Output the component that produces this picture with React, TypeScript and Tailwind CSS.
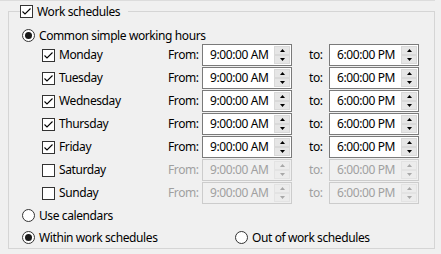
import React from 'react';

const days = [
  { name: 'Monday', on: true },
  { name: 'Tuesday', on: true },
  { name: 'Wednesday', on: true },
  { name: 'Thursday', on: true },
  { name: 'Friday', on: true },
  { name: 'Saturday', on: false },
  { name: 'Sunday', on: false },
];

const CheckBox = ({ checked }: { checked: boolean }) => (
  <span className="w-[13px] h-[13px] border border-[#333333] bg-white flex items-center justify-center shrink-0">
    {checked && (
      <svg width="11" height="11" viewBox="0 0 11 11">
        <path d="M1.5 5.5 L4 8 L9.5 2.5" stroke="#000" fill="none" strokeWidth="1.1" />
      </svg>
    )}
  </span>
);

const Radio = ({ checked }: { checked: boolean }) => (
  <span className="w-[13px] h-[13px] rounded-full border border-[#333333] bg-white flex items-center justify-center shrink-0">
    {checked && <span className="w-[7px] h-[7px] rounded-full bg-[#1a1a1a]" />}
  </span>
);

const Arrow = ({ up, disabled }: { up: boolean; disabled: boolean }) => (
  <svg width="5" height="3" viewBox="0 0 5 3">
    <path d={up ? 'M0 3 L2.5 0 L5 3 Z' : 'M0 0 L2.5 3 L5 0 Z'} fill={disabled ? '#a8a8a8' : '#000'} />
  </svg>
);

const TimeBox = ({ value, disabled }: { value: string; disabled: boolean }) => (
  <div
    className={
      disabled
        ? 'w-[90px] h-[22px] border border-[#cccccc] bg-[#f0f0f0] text-[#a0a0a0] flex items-center'
        : 'w-[90px] h-[22px] border border-[#7a7a7a] bg-white text-black flex items-center'
    }
  >
    <span className="pl-[7px] flex-1 leading-none">{value}</span>
    <div className="w-[17px] h-full py-px pr-px flex flex-col">
      <div
        className={
          disabled
            ? 'flex-1 border border-[#e3e3e3] bg-[#ececec] flex items-center justify-center'
            : 'flex-1 border border-[#d9d9d9] bg-[#e6e6e6] flex items-center justify-center'
        }
      >
        <Arrow up disabled={disabled} />
      </div>
      <div
        className={
          disabled
            ? 'flex-1 border border-[#e3e3e3] bg-[#ececec] flex items-center justify-center'
            : 'flex-1 border border-[#d9d9d9] bg-[#e6e6e6] flex items-center justify-center'
        }
      >
        <Arrow up={false} disabled={disabled} />
      </div>
    </div>
  </div>
);

export default function App() {
  return (
    <div
      className="w-[441px] h-[254px] bg-[#f0f0f0] text-[12px] tracking-[-0.4px] text-black overflow-hidden"
      style={{ fontFamily: '"Noto Sans", "Segoe UI", sans-serif' }}
    >
      {/* bottom edge of the group above */}
      <div className="w-[435px] h-px bg-[#dcdcdc]" />

      <fieldset className="ml-[8px] w-[427px] h-[249px] -mt-px border border-[#d5d5d5] px-0 pb-[5px] m-0 min-w-0">
        <legend className="ml-[11px] pr-[8px] h-[23px] flex items-center gap-[4px]">
          <CheckBox checked />
          <span>Work schedules</span>
        </legend>

        <div className="flex flex-col">
          {/* common hours */}
          <div className="mt-[6px] h-[13px] pl-[13px] flex items-center gap-[4px]">
            <Radio checked />
            <span>Common simple working hours</span>
          </div>

          <div className="mt-[2px] flex flex-col gap-px">
            {days.map((d) => (
              <div key={d.name} className="h-[22px] flex items-center">
                <div className="w-[159px] pl-[33px] flex items-center gap-[4px]">
                  <CheckBox checked={d.on} />
                  <span>{d.name}</span>
                </div>
                <span className={d.on ? 'w-[34px]' : 'w-[34px] text-[#a0a0a0]'}>From:</span>
                <TimeBox value="9:00:00 AM" disabled={!d.on} />
                <span className={d.on ? 'w-[37px] pl-[17px]' : 'w-[37px] pl-[17px] text-[#a0a0a0]'}>to:</span>
                <TimeBox value="6:00:00 PM" disabled={!d.on} />
              </div>
            ))}
          </div>

          <div className="mt-[5px] h-[13px] pl-[13px] flex items-center gap-[4px]">
            <Radio checked={false} />
            <span>Use calendars</span>
          </div>

          <div className="mt-[9px] h-[13px] pl-[13px] flex items-center">
            <div className="w-[213px] flex items-center gap-[4px]">
              <Radio checked />
              <span>Within work schedules</span>
            </div>
            <div className="flex items-center gap-[4px]">
              <Radio checked={false} />
              <span>Out of work schedules</span>
            </div>
          </div>
        </div>
      </fieldset>
    </div>
  );
}
